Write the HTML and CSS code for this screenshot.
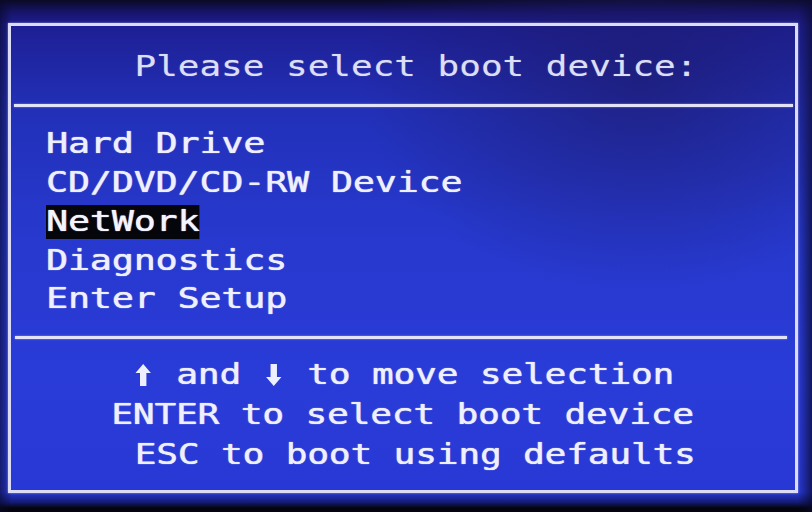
FILE: index.html
```html
<!DOCTYPE html>
<html lang="en">
<head>
<meta charset="utf-8">
<title>Boot menu</title>
<link rel="stylesheet" href="styles.css">
</head>
<body>
<div class="screen">
  <div class="frame">
    <div class="title"><span class="t">Please select boot device:</span></div>
    <div class="rule rule-top"></div>
    <ul class="menu">
      <li><span class="m">Hard Drive</span></li>
      <li><span class="m">CD/DVD/CD-RW Device</span></li>
      <li><span class="m sel">NetWork</span></li>
      <li><span class="m">Diagnostics</span></li>
      <li><span class="m">Enter Setup</span></li>
    </ul>
    <div class="rule rule-bottom"></div>
    <div class="help">
      <div class="hl"><span class="h"><svg class="arrow" viewBox="0 0 14 24" width="14" height="24"><path d="M7 1 L13 10 L9.5 10 L9.5 23 L4.5 23 L4.5 10 L1 10 Z" fill="currentColor"/></svg> and <svg class="arrow" viewBox="0 0 14 24" width="14" height="24"><path d="M7 23 L13 14 L9.5 14 L9.5 1 L4.5 1 L4.5 14 L1 14 Z" fill="currentColor"/></svg> to move selection</span></div>
      <div class="hl"><span class="h">ENTER to select boot device</span></div>
      <div class="hl"><span class="h esc">ESC to boot using defaults</span></div>
    </div>
  </div>
</div>
</body>
</html>
```

FILE: styles.css
```css
html, body {
  margin: 0;
  padding: 0;
  background: #040410;
}
.screen {
  width: 812px;
  height: 512px;
  overflow: hidden;
  box-sizing: border-box;
  padding-top: 23px;
  padding-left: 8px;
  background:
    radial-gradient(ellipse 280px 210px at 640px 80px, rgba(28, 24, 100, 0.6), rgba(28, 24, 100, 0) 100%),
    linear-gradient(to right, rgba(8, 8, 40, 0.6) 0px, rgba(8, 8, 40, 0) 12px, rgba(8, 8, 40, 0) 798px, rgba(8, 8, 40, 0.7) 812px),
    linear-gradient(to bottom, #0b0a24 0px, #17146a 12px, #1e1f94 26px, #2230b8 110px, #2638cc 220px, #2a3cd8 380px, #2838d4 492px, #141c78 502px, #04040e 508px);
  font-family: "DejaVu Sans Mono", "Liberation Mono", monospace;
  color: #eceeff;
}
.frame {
  width: 790px;
  height: 470px;
  box-sizing: border-box;
  border: 3px solid #dcdcf6;
  display: flex;
  flex-direction: column;
  box-shadow: 0 0 2px rgba(220, 220, 255, 0.6);
}
.title {
  height: 78px;
  display: flex;
  align-items: center;
  justify-content: center;
  padding: 2px 0 0 26px;
  box-sizing: border-box;
}
.t {
  display: inline-block;
  font-size: 29px;
  line-height: 30px;
  transform: scaleX(1.24);
  color: #dcdef4;
  text-shadow: 0 0 1px rgba(230, 230, 255, 0.5);
}
.rule {
  height: 3px;
  background: #e2e2f8;
  box-shadow: 0 0 2px rgba(220, 220, 255, 0.6);
}
.rule-top {
  margin: 0 2px 0 3px;
}
.rule-bottom {
  margin: 0 8px 0 4px;
}
.menu {
  list-style: none;
  margin: 0;
  padding: 18px 0 17px 35px;
}
.menu li {
  height: 38.75px;
  display: flex;
  align-items: center;
}
.m {
  display: inline-block;
  font-size: 28px;
  line-height: 34px;
  transform: scaleX(1.3);
  transform-origin: left center;
  color: #eef0ff;
  text-shadow: 0 0 1px rgba(240, 240, 255, 0.9), 0.5px 0 0 rgba(240, 240, 255, 0.7);
}
.sel {
  background: #05050c;
  color: #f4f4ff;
}
.help {
  padding-top: 16px;
  display: flex;
  flex-direction: column;
}
.hl {
  height: 40px;
  display: flex;
  align-items: center;
  justify-content: center;
}
.h {
  display: inline-block;
  font-size: 28px;
  line-height: 30px;
  transform: scaleX(1.28);
  color: #eef0ff;
  white-space: pre;
  text-shadow: 0 0 1px rgba(240, 240, 255, 0.9), 0.5px 0 0 rgba(240, 240, 255, 0.7);
}
.arrow {
  display: inline-block;
  vertical-align: -3px;
  margin: 0 2px;
}
.esc {
  position: relative;
  left: 12px;
}
```
